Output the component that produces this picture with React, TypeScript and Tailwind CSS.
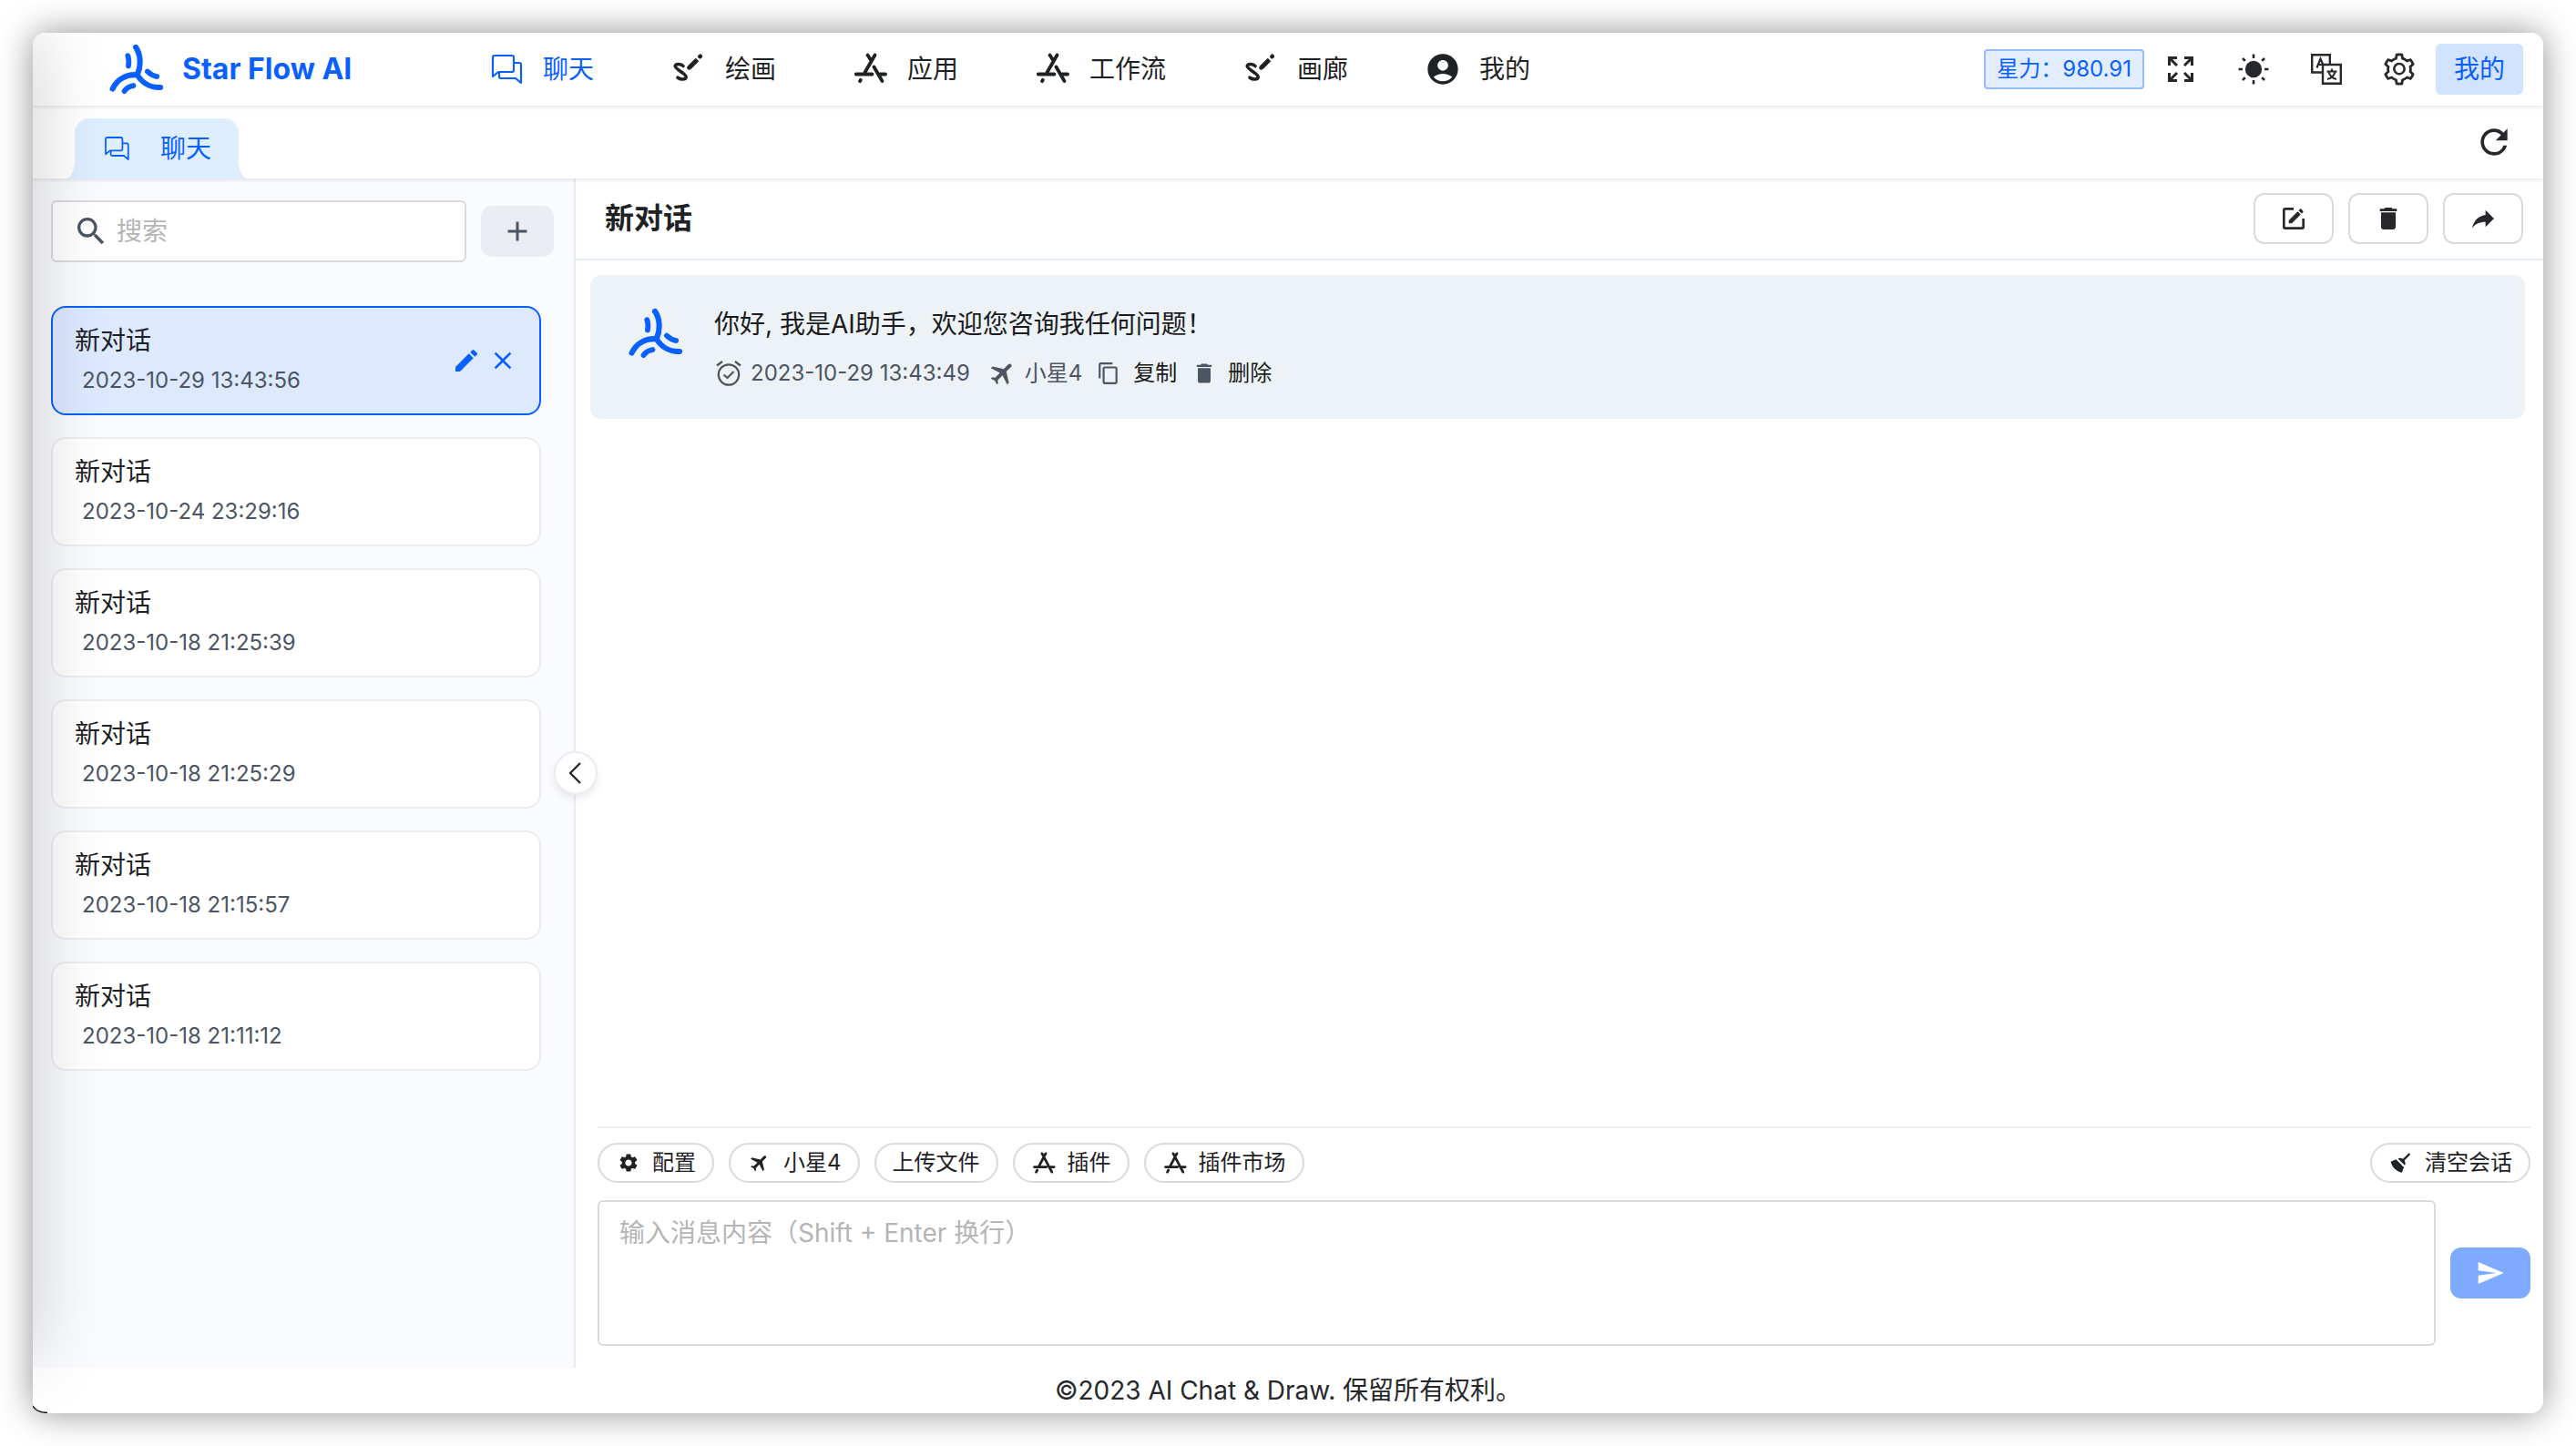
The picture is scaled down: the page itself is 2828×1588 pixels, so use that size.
import type { ReactNode } from "react";
import {
  MdAccountCircle,
  MdAdd,
  MdClose,
  MdContentCopy,
  MdDelete,
  MdEdit,
  MdFlight,
  MdRefresh,
  MdSearch,
  MdSend,
  MdSettings,
} from "react-icons/md";
import { AiOutlineSetting } from "react-icons/ai";

type IconProps = { className?: string };

function Logo() {
  return (
    <svg viewBox="30 20 186 174" className="h-14 w-15 text-[#0a60ff]" fill="none" stroke="currentColor" strokeLinecap="round" aria-hidden="true">
      <path d="M120 32C137 56 139 94 126 124" strokeWidth="19" />
      <path d="M41 174C55 144 84 125 122 126" strokeWidth="19" />
      <path d="M124 124C142 155 172 171 204 169" strokeWidth="19" />
      <path d="M93 61C97 72 97 82 95 96" strokeWidth="18" />
      <path d="M160 115C170 125 179 130 192 132" strokeWidth="18" />
      <path d="M81 182C88 171 98 165 112 163" strokeWidth="18" />
    </svg>
  );
}

function ChatIcon({ className }: IconProps) {
  return (
    <svg viewBox="0 0 40 40" className={className} fill="none" stroke="currentColor" strokeWidth="2.200" strokeLinejoin="round" aria-hidden="true">
      <path d="M5 28V7Q5 5 7 5H26Q28 5 28 7V21Q28 23 26 23H11Z" />
      <path d="M28 13H34Q36 13 36 15V35L30 30H14Q12 30 12 28V23" />
    </svg>
  );
}

function BrushIcon({ className }: IconProps) {
  return (
    <svg viewBox="0 0 40 40" className={className} fill="none" stroke="currentColor" strokeLinecap="round" aria-hidden="true">
      <path d="M14 16.500C12 14 6 13.500 5.200 16.500C4.500 19.500 17.500 25 17.200 28.500C17 32 11 31.500 8 29.200" strokeWidth="3.600" />
      <path d="M21 18L29.500 9.500" strokeWidth="5" strokeLinecap="butt" />
      <path d="M20.500 18.400L21.500 17.400M32.400 6.200L32.800 5.800" strokeWidth="4.600" />
    </svg>
  );
}

function AppsIcon({ className }: IconProps) {
  return (
    <svg viewBox="0 0 40 40" className={className} fill="none" stroke="currentColor" strokeWidth="3.800" strokeLinecap="round" aria-hidden="true">
      <path d="M24.500 4.500L13.500 23.500M16.500 4.500L20 10M3.800 25.500H21.500M30 25.500H36M23.500 17.500L32.500 33M8.800 31.800L8 33.200" />
    </svg>
  );
}

function PluginIcon({ className }: IconProps) {
  return (
    <svg viewBox="0 0 40 40" className={className} fill="none" stroke="currentColor" strokeWidth="4" strokeLinecap="round" aria-hidden="true">
      <path d="M22.800 5.500L12 26M17.200 5.500L32.500 34.500M5 26.500H24M31 26.500H36M9.500 31.500L8 34.500" />
    </svg>
  );
}

function ExpandIcon({ className }: IconProps) {
  return (
    <svg viewBox="0 0 28 28" className={className} fill="none" stroke="currentColor" strokeWidth="3" aria-hidden="true">
      <path d="M1.500 10V1.500H10M1.500 1.500L10 10M18 1.500H26.500V10M26.500 1.500L18 10M1.500 18V26.500H10M1.500 26.500L10 18M18 26.500H26.500V18M26.500 26.500L18 18" />
    </svg>
  );
}

function SunIcon({ className }: IconProps) {
  return (
    <svg viewBox="0 0 34 34" className={className} fill="none" stroke="currentColor" strokeWidth="2.600" aria-hidden="true">
      <circle cx="17" cy="17" r="9.200" fill="currentColor" stroke="none" />
      <path d="M17 .5V5M17 29V33.500M.5 17H5M29 17H33.500M5 5L7.800 7.800M26.200 26.200L29 29M29 5L26.200 7.800M7.800 26.200L5 29" />
    </svg>
  );
}

function LanguageIcon({ className }: IconProps) {
  return (
    <svg viewBox="0 0 34 34" className={className} fill="none" stroke="currentColor" strokeWidth="2.400" aria-hidden="true">
      <path d="M13 20.500H1.200V1.200H20.800V12" />
      <path d="M13 12H32.800V32.800H13Z" />
      <path d="M6.500 15.500L10.500 5.500L13.500 12.500M8 12H12.500" strokeWidth="2.200" />
      <path d="M17.500 19.500H28.500M23 16.500V19.500M19.500 20C20.500 24 24 27 28 28M26.500 20C25.500 24 22 27 18 28" strokeWidth="2" />
    </svg>
  );
}

function EditBoxIcon({ className }: IconProps) {
  return (
    <svg viewBox="0 0 24 24" className={className} fill="currentColor" aria-hidden="true">
      <path d="M5,3C3.890,3 3,3.890 3,5V19A2,2 0 0,0 5,21H19A2,2 0 0,0 21,19V12H19V19H5V5H12V3H5M17.780,4C17.610,4 17.430,4.070 17.300,4.200L16.080,5.410L18.580,7.910L19.800,6.700C20.060,6.440 20.060,6 19.800,5.750L18.250,4.200C18.120,4.070 17.950,4 17.780,4M15.370,6.120L8,13.500V16H10.500L17.870,8.620L15.370,6.120Z" />
    </svg>
  );
}

function ShareIcon({ className }: IconProps) {
  return (
    <svg viewBox="0 0 24 24" className={className} fill="currentColor" aria-hidden="true">
      <path d="M21,12L14,5V9C7,10 4,15 3,20C5.500,16.500 9,14.900 14,14.900V19L21,12Z" />
    </svg>
  );
}

function BroomIcon({ className }: IconProps) {
  return (
    <svg viewBox="0 0 24 24" className={className} fill="currentColor" aria-hidden="true">
      <path d="M19.360,2.720L20.780,4.140L15.060,9.850C16.130,11.390 16.280,13.240 15.380,14.440L9.060,8.120C10.260,7.220 12.110,7.370 13.650,8.440L19.360,2.720M5.930,17.570C3.920,15.560 2.690,13.160 2.350,10.920L7.230,8.830L14.670,16.270L12.580,21.150C10.340,20.810 7.940,19.580 5.930,17.570Z" />
    </svg>
  );
}

function AlarmIcon({ className }: IconProps) {
  return (
    <svg viewBox="0 0 28 28" className={className} fill="none" stroke="currentColor" strokeWidth="2.200" aria-hidden="true">
      <circle cx="14" cy="15.500" r="11.200" />
      <path d="M1 5.500L7 1M27 5.500L21 1M8.500 15.500L12.500 19L19.500 12" />
    </svg>
  );
}

const navItems: { label: string; icon: ReactNode; active?: boolean }[] = [
  { label: "聊天", icon: <ChatIcon className="size-10" />, active: true },
  { label: "绘画", icon: <BrushIcon className="size-10" /> },
  { label: "应用", icon: <AppsIcon className="size-10" /> },
  { label: "工作流", icon: <AppsIcon className="size-10" /> },
  { label: "画廊", icon: <BrushIcon className="size-10" /> },
  { label: "我的", icon: <MdAccountCircle className="size-10" /> },
];

const toolIcons: { label: string; icon: ReactNode }[] = [
  { label: "全屏", icon: <ExpandIcon className="size-7" /> },
  { label: "主题", icon: <SunIcon className="size-8.5" /> },
  { label: "语言", icon: <LanguageIcon className="size-8.5" /> },
  { label: "设置", icon: <AiOutlineSetting className="size-10" /> },
];

const conversations = [
  "2023-10-29 13:43:56",
  "2023-10-24 23:29:16",
  "2023-10-18 21:25:39",
  "2023-10-18 21:25:29",
  "2023-10-18 21:15:57",
  "2023-10-18 21:11:12",
];

function Header() {
  return (
    <header className="relative flex h-20 items-center justify-between bg-white pr-[22px] pl-21 shadow-[0_2px_4px_rgba(0,21,41,0.1)]">
      <div className="flex items-center">
        <div className="flex w-104 items-center gap-5">
          <Logo />
          <h1 className="text-[32px] leading-10 font-bold text-[#0a60ff]">Star Flow AI</h1>
        </div>
        <nav className="flex items-center gap-21">
          {navItems.map((item) => (
            <a
              key={item.label}
              href="#"
              className={
                item.active
                  ? "flex items-center gap-5 text-[28px] leading-10 text-[#0a60ff]"
                  : "flex items-center gap-5 text-[28px] leading-10 text-[#1f2225]"
              }
            >
              {item.icon}
              <span>{item.label}</span>
            </a>
          ))}
        </nav>
      </div>
      <div className="flex items-center text-[#27282c]">
        <span className="flex h-11 items-center rounded border-2 border-[#97bbff] bg-[#e2edff] px-3 text-2xl leading-8 whitespace-nowrap text-[#0a60ff]">
          星力：980.91
        </span>
        {toolIcons.map((tool) => (
          <button key={tool.label} type="button" aria-label={tool.label} className="flex h-14 w-20 items-center justify-center">
            {tool.icon}
          </button>
        ))}
        <button type="button" className="h-14 w-24 rounded-md bg-[#d2e3ff] text-[28px] leading-10 text-[#0a60ff]">
          我的
        </button>
      </div>
    </header>
  );
}

function TabBar() {
  return (
    <div className="relative flex h-20 items-end justify-between bg-white pr-8 pl-[46px] shadow-[0_2px_4px_rgba(0,21,41,0.1)]">
      <a
        href="#"
        className="relative flex h-[66px] w-45 items-center gap-8 rounded-t-2xl bg-[#dfeeff] pl-[30px] text-[28px] leading-10 text-[#0a60ff]"
      >
        <span className="absolute bottom-0 -left-2.5 h-5 w-2.5 bg-[radial-gradient(ellipse_at_top_left,transparent_70%,#dfeeff_71%)]" />
        <ChatIcon className="size-8" />
        <span>聊天</span>
        <span className="absolute -right-2.5 bottom-0 h-5 w-2.5 bg-[radial-gradient(ellipse_at_top_right,transparent_70%,#dfeeff_71%)]" />
      </a>
      <button type="button" aria-label="刷新" className="flex h-20 items-center text-[#27282c]">
        <MdRefresh className="size-11" />
      </button>
    </div>
  );
}

function Sidebar() {
  return (
    <aside className="relative flex w-149 shrink-0 flex-col border-r-2 border-[#eaebf0] bg-[#f9fbff] pt-6 pr-5.5 pl-5">
      <div className="flex items-center gap-4">
        <label className="flex h-17 min-w-0 flex-1 items-center gap-2 rounded-md border-2 border-[#d9d9e0] bg-white px-5.5">
          <MdSearch className="size-10 shrink-0 text-[#4b5563]" />
          <input
            type="text"
            aria-label="搜索"
            placeholder="搜索"
            className="w-full min-w-0 bg-transparent text-[28px] leading-10 outline-none placeholder:text-[#b5b5b5]"
          />
        </label>
        <button type="button" aria-label="新建对话" className="flex h-14 w-20 items-center justify-center rounded-xl bg-[#eaedf2] text-[#4b5563]">
          <MdAdd className="size-9" />
        </button>
      </div>
      <ul className="mt-12 flex flex-col gap-6 pr-3.5">
        {conversations.map((time, index) => (
          <li
            key={time}
            className={
              index === 0
                ? "flex h-30 items-center justify-between rounded-2xl border-2 border-[#0a60ff] bg-[#dde9ff] px-6"
                : "flex h-30 items-center justify-between rounded-2xl border-2 border-[#ebebf1] bg-white px-6"
            }
          >
            <div>
              <div className="text-[28px] leading-11 text-[#1f2225]">新对话</div>
              <time className="block pl-2 text-2xl leading-11 text-[#4b5563]">{time}</time>
            </div>
            {index === 0 && (
              <div className="flex items-center gap-2 text-[#0a60ff]">
                <button type="button" aria-label="编辑">
                  <MdEdit className="size-8" />
                </button>
                <button type="button" aria-label="关闭">
                  <MdClose className="size-8" />
                </button>
              </div>
            )}
          </li>
        ))}
      </ul>
      <button
        type="button"
        aria-label="收起侧栏"
        className="absolute top-1/2 -right-[26px] z-10 flex size-12 -translate-y-1/2 items-center justify-center rounded-full border-2 border-[#ebebf1] bg-white text-[#27282c] shadow-[0_4px_8px_rgba(0,0,0,0.08)]"
      >
        <svg viewBox="0 0 24 24" className="size-6" fill="none" stroke="currentColor" strokeWidth="2.400" strokeLinejoin="round" aria-hidden="true">
          <path d="M17 1L6 12L17 23" />
        </svg>
      </button>
    </aside>
  );
}

function OutlineButton({ label, children }: { label: string; children: ReactNode }) {
  return (
    <button type="button" aria-label={label} className="flex h-14 w-22 items-center justify-center rounded-xl border-2 border-[#d9d9e0] bg-white text-[#27282c]">
      {children}
    </button>
  );
}

function Pill({ icon, children }: { icon?: ReactNode; children: ReactNode }) {
  return (
    <button
      type="button"
      className="flex h-11 items-center gap-3 rounded-full border-2 border-[#d9d9e0] bg-white px-[18px] text-2xl leading-8 whitespace-nowrap text-[#1f2225]"
    >
      {icon && <span className="flex size-7 items-center justify-center">{icon}</span>}
      <span>{children}</span>
    </button>
  );
}

function Message() {
  return (
    <article className="mt-4 mr-5 ml-4 flex h-[158px] gap-8 rounded-xl bg-[#edf2f6] px-[42px] py-8">
      <div className="pt-1">
        <Logo />
      </div>
      <div className="pl-0.5">
        <p className="text-[28px] leading-11 text-[#1a1c20]">你好, 我是AI助手，欢迎您咨询我任何问题！</p>
        <div className="mt-3.5 flex items-center text-2xl leading-9 text-[#4b5563]">
          <AlarmIcon className="ml-0.5 size-7" />
          <time className="ml-2.5">2023-10-29 13:43:49</time>
          <MdFlight className="ml-5 size-8 rotate-45" />
          <span className="ml-2">小星4</span>
          <button type="button" className="ml-4 flex items-center gap-3.5 text-[#1a1c20]">
            <MdContentCopy className="size-[26px] text-[#4b5563]" />
            复制
          </button>
          <button type="button" className="ml-4 flex items-center gap-3 text-[#1a1c20]">
            <MdDelete className="size-7 text-[#4b5563]" />
            删除
          </button>
        </div>
      </div>
    </article>
  );
}

function Composer() {
  return (
    <section className="mr-3.5 ml-6 border-t-2 border-[#ebebf1] pt-4 pb-6">
      <div className="flex items-center gap-4">
        <Pill icon={<MdSettings className="size-6" />}>配置</Pill>
        <Pill icon={<MdFlight className="size-6 rotate-45" />}>小星4</Pill>
        <Pill>上传文件</Pill>
        <Pill icon={<PluginIcon className="size-7" />}>插件</Pill>
        <Pill icon={<PluginIcon className="size-7" />}>插件市场</Pill>
        <div className="ml-auto">
          <Pill icon={<BroomIcon className="size-7" />}>清空会话</Pill>
        </div>
      </div>
      <div className="mt-[19px] flex items-center gap-4">
        <textarea
          aria-label="消息内容"
          placeholder="输入消息内容（Shift + Enter 换行）"
          className="block h-40 min-w-0 flex-1 resize-none rounded-md border-2 border-[#d9d9e0] bg-white px-5.5 py-3 text-[28px] leading-11 outline-none placeholder:text-[#b5b5b5]"
        />
        <button type="button" aria-label="发送" className="flex h-14 w-22 items-center justify-center rounded-xl bg-[#7eabff] text-white">
          <MdSend className="size-8" />
        </button>
      </div>
    </section>
  );
}

export default function App() {
  return (
    <div className="flex min-h-screen bg-white p-9 font-['Inter','Noto_Sans_CJK_SC',sans-serif]">
      <div className="relative flex flex-1 rounded-[14px] shadow-[0_0_38px_rgba(0,0,0,0.44)]">
        <div className="relative flex min-w-0 flex-1 flex-col overflow-hidden rounded-[14px] bg-white">
          <div className="relative z-20">
            <Header />
          </div>
          <div className="relative z-10">
            <TabBar />
          </div>
          <div className="flex flex-1">
            <Sidebar />
            <main className="flex min-w-0 flex-1 flex-col bg-white">
              <div className="flex h-[90px] items-center justify-between border-b-2 border-[#e0ebfb] pr-[22px] pl-8">
                <h2 className="text-[32px] leading-11 font-bold text-[#1f2225]">新对话</h2>
                <div className="flex gap-4">
                  <OutlineButton label="编辑">
                    <EditBoxIcon className="size-8" />
                  </OutlineButton>
                  <OutlineButton label="删除">
                    <MdDelete className="size-8" />
                  </OutlineButton>
                  <OutlineButton label="分享">
                    <ShareIcon className="size-8" />
                  </OutlineButton>
                </div>
              </div>
              <div className="flex-1">
                <Message />
              </div>
              <Composer />
            </main>
          </div>
          <footer className="flex h-[50px] items-center justify-center text-[28px] leading-10 text-[#27282c]">
            ©2023 AI Chat &amp; Draw. 保留所有权利。
          </footer>
          <div className="pointer-events-none absolute top-0 bottom-16 -left-10 z-30 w-10 shadow-[0_0_76px_rgba(0,0,0,0.25)]" />
        </div>
        <svg viewBox="0 0 18 10" className="pointer-events-none absolute bottom-0 left-0 h-2.5 w-4.5" fill="none" stroke="#111" strokeWidth="1.400" aria-hidden="true">
          <path d="M0 2Q4 9 16 9.500" />
        </svg>
      </div>
    </div>
  );
}
